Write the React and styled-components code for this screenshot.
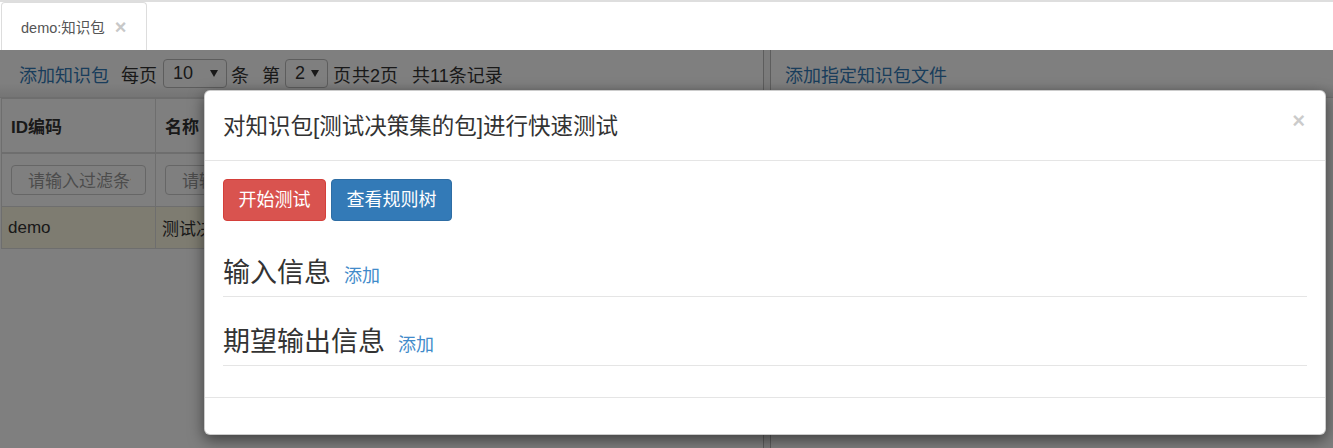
import React from "react";
import styled, { createGlobalStyle } from "styled-components";

const fontStack = `"Liberation Sans", "Noto Sans CJK SC", sans-serif`;

const GlobalStyle = createGlobalStyle`
  html, body {
    margin: 0;
    padding: 0;
    background: #fff;
    font-family: ${fontStack};
    color: #333;
  }
  #root {
    height: 100vh;
  }
  * {
    box-sizing: border-box;
  }
`;

const Page = styled.div`
  height: 100%;
  display: flex;
  flex-direction: column;
  border-top: 2px solid #dedede;
`;

const TabStrip = styled.div`
  height: 48px;
  display: flex;
  align-items: stretch;
  padding-left: 1px;
  flex-shrink: 0;
`;

const Tab = styled.div`
  width: 146px;
  display: flex;
  align-items: center;
  padding-left: 19px;
  gap: 10px;
  font-size: 14.5px;
  color: #555;
  background: #fff;
  border: 1px solid #ddd;
  border-bottom: none;
  border-radius: 4px 4px 0 0;
`;

const TabClose = styled.span`
  font-size: 20px;
  font-weight: bold;
  color: #c8c8c8;
  line-height: 1;
  margin-top: 1px;
`;

const Content = styled.div`
  position: relative;
  flex: 1;
  display: flex;
  overflow: hidden;
`;

const LeftPanel = styled.div`
  width: 763px;
  display: flex;
  flex-direction: column;
`;

const Splitter = styled.div`
  width: 8px;
  border-left: 1px solid #bbb;
  border-right: 1px solid #bbb;
  background: #f6f6f6;
`;

const RightPanel = styled.div`
  flex: 1;
  display: flex;
  flex-direction: column;
`;

const Toolbar = styled.div`
  height: 48px;
  display: flex;
  align-items: center;
  padding-left: ${p => p.$pad || 19}px;
  font-size: 18px;
  color: #333;
  white-space: nowrap;
  background: linear-gradient(#fff 70%, #eaeaea);
  border-bottom: 1px solid #ddd;
`;

const ToolLink = styled.a`
  color: #337ab7;
  text-decoration: none;
`;

const Label = styled.span`
  margin-left: ${p => p.$ml || 0}px;
`;

const FakeSelect = styled.div`
  width: ${p => p.$w}px;
  height: 29px;
  margin-left: ${p => p.$ml || 0}px;
  border: 1px solid #bbb;
  border-radius: 4px;
  background: #fff;
  display: flex;
  align-items: center;
  justify-content: space-between;
  padding: 0 8px 0 9px;
  font-size: 18px;
`;

const Caret = () => (
  <svg width="8" height="7" viewBox="0 0 8 7">
    <path d="M0 0 L8 0 L4 7 Z" fill="#333" />
  </svg>
);

const Table = styled.table`
  border-collapse: collapse;
  width: 761px;
  margin-left: 1px;
  font-size: 17px;
  table-layout: fixed;
`;

const HeadCell = styled.th`
  text-align: left;
  font-weight: bold;
  height: 54px;
  padding: 0 9px;
  border: 1px solid #ddd;
  border-bottom: 2px solid #ddd;
  width: ${p => p.$w}px;
`;

const FilterCell = styled.td`
  height: 54px;
  padding: 0 9px;
  border: 1px solid #ddd;
`;

const FilterInput = styled.div`
  height: 30px;
  border: 1px solid #ccc;
  border-radius: 4px;
  display: flex;
  align-items: center;
  padding: 0 14px 0 16px;
  color: #999;
  font-size: 17px;
`;

const Placeholder = styled.span`
  white-space: nowrap;
  overflow: hidden;
`;

const DataRow = styled.tr`
  background: #fcf8e3;
`;

const DataCell = styled.td`
  height: 42px;
  padding: 0 6px;
  border: 1px solid #ddd;
  white-space: nowrap;
  overflow: hidden;
`;

const Backdrop = styled.div`
  position: absolute;
  inset: 0;
  background: rgba(0, 0, 0, 0.5);
`;

const Modal = styled.div`
  position: absolute;
  left: 204px;
  top: 40px;
  width: 1122px;
  background: #fff;
  border: 1px solid rgba(0, 0, 0, 0.2);
  border-radius: 6px;
  box-shadow: 0 5px 15px rgba(0, 0, 0, 0.5);
`;

const ModalHeader = styled.div`
  height: 70px;
  display: flex;
  align-items: center;
  justify-content: space-between;
  padding: 0 20px 4px 18px;
  border-bottom: 1px solid #e5e5e5;
`;

const ModalTitle = styled.h4`
  margin: 0;
  font-size: 22.5px;
  font-weight: normal;
  color: #333;
`;

const CloseButton = styled.span`
  font-size: 22px;
  font-weight: bold;
  color: #000;
  opacity: 0.2;
  line-height: 1;
  margin-bottom: 6px;
`;

const ModalBody = styled.div`
  padding: 18px;
`;

const ButtonBar = styled.div`
  display: flex;
  gap: 5px;
`;

const Button = styled.button`
  font-family: ${fontStack};
  font-size: 18px;
  line-height: 22px;
  padding: 9px 14.5px;
  border-radius: 4px;
  color: #fff;
  cursor: pointer;
  background: ${p => (p.$variant === "danger" ? "#d9534f" : "#337ab7")};
  border: 1px solid ${p => (p.$variant === "danger" ? "#d43f3a" : "#2e6da4")};
`;

const Section = styled.div`
  display: flex;
  align-items: baseline;
  gap: 13px;
  margin-top: ${p => (p.$last ? 30 : 37)}px;
  padding-bottom: 8px;
  border-bottom: 1px solid #e5e5e5;
  margin-bottom: ${p => (p.$last ? 13 : 0)}px;
`;

const SectionTitle = styled.h3`
  margin: 0;
  font-size: 27px;
  font-weight: normal;
  line-height: 30px;
  color: #333;
`;

const SectionLink = styled.a`
  font-size: 18px;
  color: #428bca;
  text-decoration: none;
`;

const ModalFooter = styled.div`
  height: 37px;
  border-top: 1px solid #e5e5e5;
`;

export default function App() {
  return (
    <>
      <GlobalStyle />
      <Page>
        <TabStrip>
          <Tab>
            demo:知识包
            <TabClose>×</TabClose>
          </Tab>
        </TabStrip>
        <Content>
          <LeftPanel>
            <Toolbar>
              <ToolLink>添加知识包</ToolLink>
              <Label $ml={12}>每页</Label>
              <FakeSelect $w={64} $ml={6}>
                10
                <Caret />
              </FakeSelect>
              <Label $ml={4}>条</Label>
              <Label $ml={13}>第</Label>
              <FakeSelect $w={43} $ml={5}>
                2
                <Caret />
              </FakeSelect>
              <Label $ml={5}>页</Label>
              <Label $ml={1}>共2页</Label>
              <Label $ml={14}>共11条记录</Label>
            </Toolbar>
            <Table>
              <thead>
                <tr>
                  <HeadCell $w={154}>ID编码</HeadCell>
                  <HeadCell $w={160}>名称</HeadCell>
                  <HeadCell $w={260}>备注</HeadCell>
                  <HeadCell>操作</HeadCell>
                </tr>
              </thead>
              <tbody>
                <tr>
                  <FilterCell>
                    <FilterInput>
                      <Placeholder>请输入过滤条件</Placeholder>
                    </FilterInput>
                  </FilterCell>
                  <FilterCell>
                    <FilterInput>
                      <Placeholder>请输入过滤条件</Placeholder>
                    </FilterInput>
                  </FilterCell>
                  <FilterCell>
                    <FilterInput>
                      <Placeholder>请输入过滤条件</Placeholder>
                    </FilterInput>
                  </FilterCell>
                  <FilterCell />
                </tr>
                <DataRow>
                  <DataCell>demo</DataCell>
                  <DataCell>测试决策集的包</DataCell>
                  <DataCell />
                  <DataCell />
                </DataRow>
              </tbody>
            </Table>
          </LeftPanel>
          <Splitter />
          <RightPanel>
            <Toolbar $pad={14}>
              <ToolLink>添加指定知识包文件</ToolLink>
            </Toolbar>
          </RightPanel>
          <Backdrop />
          <Modal>
            <ModalHeader>
              <ModalTitle>对知识包[测试决策集的包]进行快速测试</ModalTitle>
              <CloseButton>×</CloseButton>
            </ModalHeader>
            <ModalBody>
              <ButtonBar>
                <Button $variant="danger">开始测试</Button>
                <Button>查看规则树</Button>
              </ButtonBar>
              <Section>
                <SectionTitle>输入信息</SectionTitle>
                <SectionLink>添加</SectionLink>
              </Section>
              <Section $last>
                <SectionTitle>期望输出信息</SectionTitle>
                <SectionLink>添加</SectionLink>
              </Section>
            </ModalBody>
            <ModalFooter />
          </Modal>
        </Content>
      </Page>
    </>
  );
}
